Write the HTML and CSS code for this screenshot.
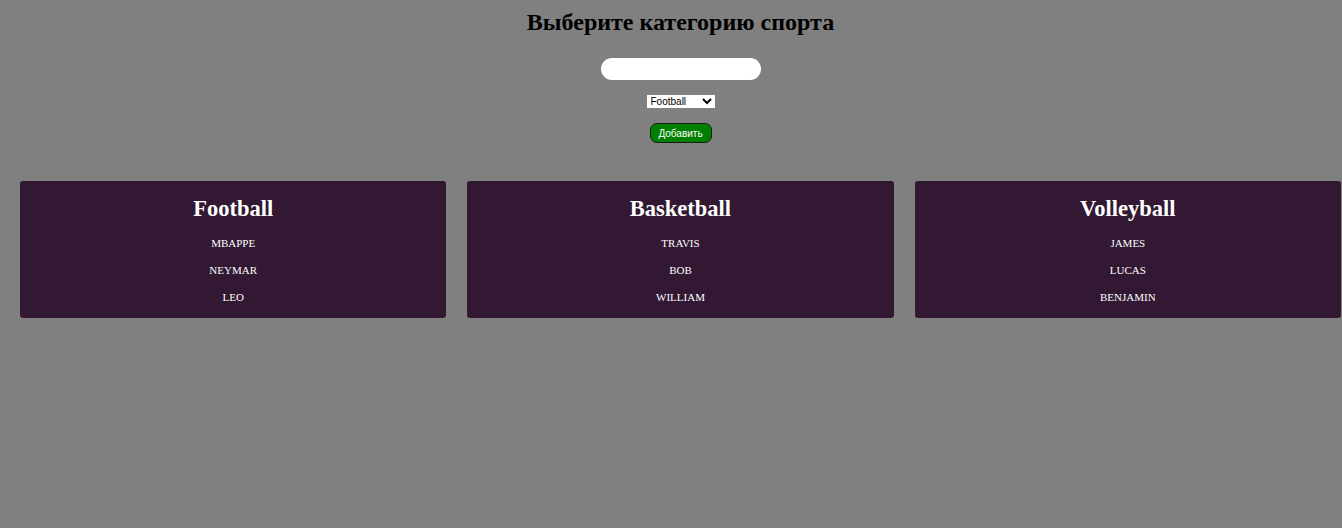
FILE: index.html
```html
<!DOCTYPE html>
<html lang="ru">
<head>
<meta charset="utf-8">
<title>Спорт</title>
<link rel="stylesheet" href="styles.css">
</head>
<body>
<div class="page">
  <div class="top">
    <h1 class="title">Выберите категорию спорта</h1>
    <input class="name-input" type="text">
    <select class="sport-select">
      <option>Football</option>
      <option>Basketball</option>
      <option>Volleyball</option>
    </select>
    <button class="add-btn">Добавить</button>
  </div>
  <div class="cards">
    <div class="card">
      <h2 class="card-title">Football</h2>
      <p class="player">MBAPPE</p>
      <p class="player">NEYMAR</p>
      <p class="player">LEO</p>
    </div>
    <div class="card">
      <h2 class="card-title">Basketball</h2>
      <p class="player">TRAVIS</p>
      <p class="player">BOB</p>
      <p class="player">WILLIAM</p>
    </div>
    <div class="card">
      <h2 class="card-title">Volleyball</h2>
      <p class="player">JAMES</p>
      <p class="player">LUCAS</p>
      <p class="player">BENJAMIN</p>
    </div>
  </div>
</div>
</body>
</html>
```
FILE: styles.css
```css
html, body {
  margin: 0;
  padding: 0;
  background: #808080;
  font-family: "Liberation Serif", "Times New Roman", serif;
}
.page {
  padding: 0 1px 0 20px;
}
.top {
  display: flex;
  flex-direction: column;
  align-items: center;
  padding-top: 8px;
}
.title {
  margin: 0;
  font-size: 24px;
  font-weight: bold;
  line-height: 28px;
  color: #000;
}
.name-input {
  margin-top: 22px;
  width: 160px;
  height: 22px;
  box-sizing: border-box;
  border: none;
  border-radius: 11px;
  background: #fff;
  padding: 0 10px;
  outline: none;
}
.sport-select {
  margin-top: 15px;
  width: 68px;
  height: 13px;
  box-sizing: border-box;
  font-family: "Liberation Sans", Arial, sans-serif;
  font-size: 10px;
  padding: 0;
  border: none;
  border-radius: 0;
  background: #fff;
  color: #000;
}
.add-btn {
  margin-top: 15px;
  width: 62px;
  height: 20px;
  box-sizing: border-box;
  background: #008000;
  color: #fff;
  border: 1px solid #1a1a1a;
  border-radius: 7px;
  font-family: "Liberation Sans", Arial, sans-serif;
  font-size: 10px;
  padding: 0;
}
.cards {
  display: flex;
  gap: 21px;
  margin-top: 38px;
}
.card {
  flex: 1;
  height: 137px;
  box-sizing: border-box;
  background: #321832;
  border-radius: 3px;
  color: #fff;
  text-align: center;
  padding-top: 15px;
}
.card-title {
  margin: 0 0 8px;
  font-size: 22.5px;
  line-height: 26px;
  font-weight: bold;
}
.player {
  margin: 0;
  font-size: 11px;
  line-height: 27px;
}
```
